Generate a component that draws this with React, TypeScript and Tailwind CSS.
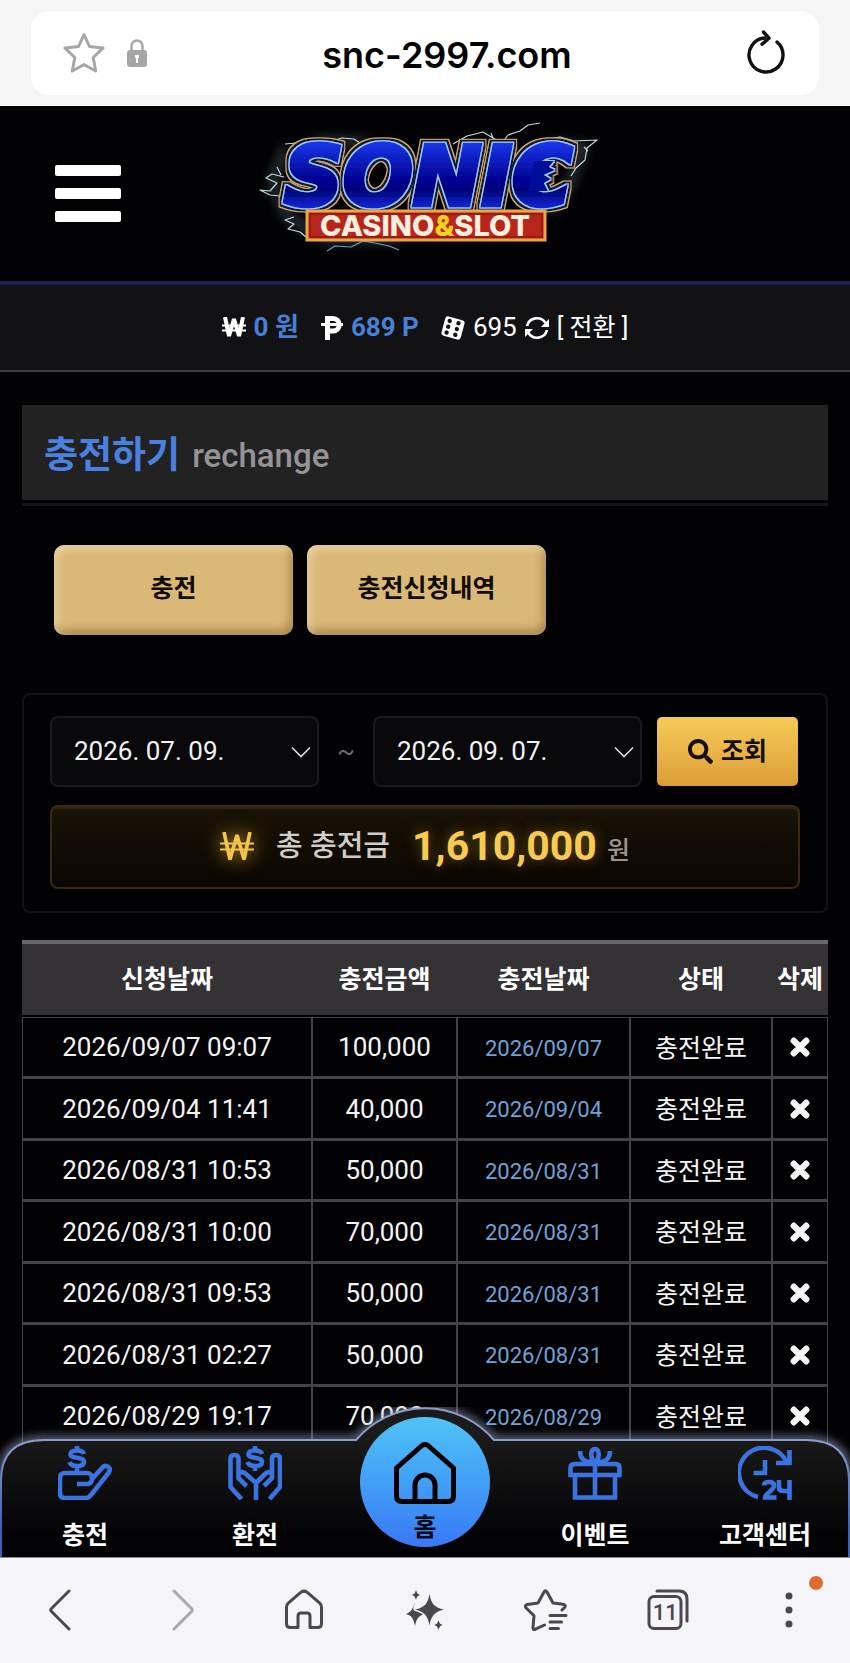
import type { ReactNode } from 'react'
import { FaSearch, FaTimes } from 'react-icons/fa'

interface Deposit {
  requestedAt: string
  amount: string
  paidAt: string
}

const deposits: Deposit[] = [
  { requestedAt: '2026/09/07 09:07', amount: '100,000', paidAt: '2026/09/07' },
  { requestedAt: '2026/09/04 11:41', amount: '40,000', paidAt: '2026/09/04' },
  { requestedAt: '2026/08/31 10:53', amount: '50,000', paidAt: '2026/08/31' },
  { requestedAt: '2026/08/31 10:00', amount: '70,000', paidAt: '2026/08/31' },
  { requestedAt: '2026/08/31 09:53', amount: '50,000', paidAt: '2026/08/31' },
  { requestedAt: '2026/08/31 02:27', amount: '50,000', paidAt: '2026/08/31' },
  { requestedAt: '2026/08/29 19:17', amount: '70,000', paidAt: '2026/08/29' },
]

/* ---------- Browser chrome ---------- */

function AddressBar() {
  return (
    <div className="shrink-0 border-b border-white bg-[#f5f5f5] px-[31px] pt-[11px] pb-[10px]">
      <div className="flex h-[84px] items-center rounded-[18px] bg-white px-8">
        <button type="button" aria-label="Bookmark">
          <svg width="42" height="42" viewBox="0 0 42 42" fill="none" stroke="#a6a6a6" strokeWidth="3" strokeLinejoin="round">
            <path d="M21 2.5l5.5 12 13.5 1.6-9.8 9.4 2.5 13.5L21 32.6 9.3 39l2.5-13.5L2 16.1l13.5-1.6z" />
          </svg>
        </button>
        <svg className="ml-[22px]" width="20" height="28" viewBox="0 0 20 28">
          <path d="M4.5 13V7a5.5 5.5 0 0 1 11 0v6" fill="none" stroke="#a6a6a6" strokeWidth="2.4" />
          <rect x="0" y="11" width="20" height="17" rx="3" fill="#a6a6a6" />
          <path d="M8 16h4v3h-1v5H9v-5H8z" fill="#fff" />
        </svg>
        <input
          type="text"
          readOnly
          aria-label="Address"
          value="snc-2997.com"
          className="min-w-0 flex-1 bg-transparent pt-1 pl-8 text-center font-['Inter',sans-serif] text-[36px] font-semibold text-black outline-none"
        />
        <button type="button" aria-label="Reload" className="ml-8">
          <svg width="40" height="46" viewBox="0 0 40 46" fill="none" stroke="#111" strokeWidth="3.4" strokeLinecap="round" strokeLinejoin="round">
            <path d="M30 12A17 17 0 1 1 18 8" />
            <path d="M16.5 2l5.5 6.2-7 6" />
          </svg>
        </button>
      </div>
    </div>
  )
}

function BrowserToolbar() {
  return (
    <nav className="grid h-[106px] shrink-0 grid-cols-7 place-items-center border-t border-[#88868a] bg-[#f5f4f8] pb-[2px] text-[#4a484d]">
      <button type="button" aria-label="Back">
        <svg width="24" height="44" viewBox="0 0 24 44" fill="none" stroke="currentColor" strokeWidth="3" strokeLinecap="round" strokeLinejoin="round">
          <path d="M20 3L2.5 20.5q-1.5 1.5 0 3L20 41" />
        </svg>
      </button>
      <button type="button" aria-label="Forward" className="text-[#a9a8ac]">
        <svg width="24" height="44" viewBox="0 0 24 44" fill="none" stroke="currentColor" strokeWidth="3" strokeLinecap="round" strokeLinejoin="round">
          <path d="M4 3l17.5 17.5q1.5 1.5 0 3L4 41" />
        </svg>
      </button>
      <button type="button" aria-label="Home">
        <svg width="40" height="42" viewBox="0 0 40 42" fill="none" stroke="currentColor" strokeWidth="3" strokeLinejoin="round">
          <path d="M14 38.5H6.5q-4 0-4-4V18q0-2.5 2-4.2L17 3.2q3-2.2 6 0l12.500 10.600q2 1.700 2 4.200v16.500q0 4-4 4H26V27q0-3-3-3h-6q-3 0-3 3z" />
        </svg>
      </button>
      <button type="button" aria-label="AI assist">
        <svg width="40" height="42" viewBox="0 0 40 42" fill="currentColor">
          <path d="M24.5 5c1.5 9 4.5 13.5 14.5 15.500-10 2.500-13 7-14.500 16-1.500-9-4.500-13.500-14.500-16C20 18.500 23 14 24.500 5z" />
          <path d="M11 1c1 3.500 1.500 4 4.500 5-3 1-3.500 1.500-4.500 5-1-3.500-1.500-4-4.500-5 3-1 3.500-1.500 4.500-5z" />
          <path d="M33.500 31c1 3.500 1.500 4 4.500 5-3 1-3.500 1.500-4.500 5-1-3.500-1.500-4-4.500-5 3-1 3.500-1.500 4.500-5z" />
          <path d="M10 14c-2.500 2.500-1 7.500-9 11C7 26.500 8.500 30 10 37c1.500-7 3-9.500 8-11.500-2-1.500-4-2-9-4-1.500-3 0-5 1-7.500z" />
        </svg>
      </button>
      <button type="button" aria-label="Bookmarks">
        <svg width="44" height="42" viewBox="0 0 44 42" fill="none" stroke="currentColor" strokeWidth="3" strokeLinecap="round" strokeLinejoin="round">
          <path d="M38 21l2.500-2.500q2-2.500-1.500-3.200l-10-1.300-6-11q-1.500-2.500-3 0l-6 11-10.500 1.500q-3.500.7-1.500 3.200l8 8-1 12q0 3 2.500 1.500L20.500 36" />
          <path d="M26 26.500h16M26 33h11.500M26 39.500h8.500" />
        </svg>
      </button>
      <button type="button" aria-label="Tabs" className="relative">
        <svg width="42" height="42" viewBox="0 0 42 42" fill="none" stroke="currentColor" strokeWidth="3" strokeLinecap="round">
          <rect x="2" y="7.500" width="32" height="32" rx="5" />
          <path d="M10 2h22q8 0 8 8v22" />
        </svg>
        <span className="absolute bottom-2 left-[6px] font-['Roboto',sans-serif] text-[22px] leading-5 font-medium">11</span>
      </button>
      <button type="button" aria-label="More" className="relative">
        <svg width="8" height="36" viewBox="0 0 8 36" fill="currentColor">
          <circle cx="4" cy="4" r="3.500" />
          <circle cx="4" cy="18" r="3.500" />
          <circle cx="4" cy="32" r="3.500" />
        </svg>
        <span className="absolute -top-4 left-6 size-[14px] rounded-full bg-[#dd6a32]" />
      </button>
    </nav>
  )
}

/* ---------- Site header ---------- */

function Logo() {
  return (
    <svg className="overflow-visible" width="350" height="134" viewBox="0 0 350 134" role="img" aria-label="Sonic Casino & Slot">
      <defs>
        <linearGradient id="blue" x1="0" y1="0" x2="0" y2="1">
          <stop offset="0.1" stopColor="#1a3cf0" />
          <stop offset="0.5" stopColor="#04069a" />
          <stop offset="0.65" stopColor="#03057a" />
          <stop offset="0.85" stopColor="#0e2ce4" />
        </linearGradient>
        <filter id="haze" x="-20%" y="-40%" width="140%" height="180%">
          <feGaussianBlur stdDeviation="6" />
        </filter>
        {/* light blue rim, dark band, then a gold edge round the word */}
        <filter id="rims" x="-10%" y="-20%" width="120%" height="140%">
          <feMorphology in="SourceAlpha" operator="dilate" radius="1" result="a" />
          <feMorphology in="SourceAlpha" operator="dilate" radius="3" result="b" />
          <feMorphology in="SourceAlpha" operator="dilate" radius="4" result="c" />
          <feFlood floodColor="#a4cdff" />
          <feComposite in2="a" operator="in" result="light" />
          <feFlood floodColor="#0a1c3c" />
          <feComposite in2="b" operator="in" result="dark" />
          <feFlood floodColor="#d8aa66" />
          <feComposite in2="c" operator="in" result="edge" />
          <feMerge>
            <feMergeNode in="edge" />
            <feMergeNode in="dark" />
            <feMergeNode in="light" />
            <feMergeNode in="SourceGraphic" />
          </feMerge>
        </filter>
      </defs>
      <g fill="none" stroke="#8fb4c4" strokeWidth="5" opacity="0.5" filter="url(#haze)">
        <path d="M36 20L22 54l14 34 30 20M300 16l34 4-14 36-18 30M66 14h50M70 112h80" />
      </g>
      <g fill="none" stroke="#c3d9de" strokeWidth="1.200" strokeLinejoin="round">
        <path d="M203 17l14-8 16-4 10 6 9 5 6-8 12-4 8-6 12-2M243 11l-2-5" />
        <path d="M298 12l12-2 14 4 23-1-10 8-2 12-9 8-5 8M334 20l4 4" />
        <path d="M82 14l10-3 12 1 6 4 12 1M56 20l-10-4-11 1M52 12l4 7" />
        <path d="M34 50l-12-3-6 4 11 5-7 8-10-1 10 5 10 1 4-8M27 40l4 8" />
        <path d="M44 90l-9 3 9 4-6 5 12 3 6 5M304 82l8-3" />
        <path d="M77 124l8-5 16 1 12-6 12 2 14 3 10 4" stroke="#6b9fce" />
      </g>
      <g filter="url(#rims)">
        <text
          x="34"
          y="78"
          className="font-['DejaVu_Sans',sans-serif] text-[82px] font-bold italic"
          fill="url(#blue)"
          stroke="url(#blue)"
          strokeWidth="5"
        >
          SONIC
        </text>
        {/* torn inner edge of the last letter */}
        <path d="M284 34h20l-5 6 6 3-11 5 7 4-7 4 4 8h-20z" fill="#06099a" />
      </g>
      <rect x="57" y="84" width="238" height="29" fill="#b8251c" stroke="#e9a748" strokeWidth="3" />
      <rect x="60" y="87" width="232" height="23" fill="none" stroke="#7c150f" />
      <text x="70" y="109" className="font-['Inter',sans-serif] text-[29px] font-extrabold" fill="#fdeedd">
        CASINO<tspan fill="#f5d21c">&amp;</tspan>SLOT
      </text>
    </svg>
  )
}

function SiteHeader() {
  return (
    <header className="flex h-[179px] items-center border-b-4 border-[#1c2352] px-[55px]">
      <button type="button" aria-label="Menu" className="flex w-[66px] flex-col gap-3">
        <span className="h-[11px] rounded-[2px] bg-white" />
        <span className="h-[11px] rounded-[2px] bg-white" />
        <span className="h-[11px] rounded-[2px] bg-white" />
      </button>
      <a href="#" className="mr-[66px] flex flex-1 justify-center">
        <Logo />
      </a>
    </header>
  )
}

function WonIcon() {
  return (
    <svg width="24" height="22" viewBox="0 0 24 22" fill="none" stroke="#fff">
      <path d="M3 0l4 19L12 2l5 17L21 0" strokeWidth="4" strokeLinejoin="bevel" />
      <path d="M0 8.500h24M0 13.500h24" strokeWidth="1.800" />
    </svg>
  )
}

function PointIcon() {
  return (
    <svg width="22" height="24" viewBox="0 0 22 24" fill="none" stroke="#fff">
      <path d="M6.500 24V2.500H12a5 5 0 0 1 0 12.500H6.500" strokeWidth="5" />
      <path d="M0 8.500h22" strokeWidth="3" />
    </svg>
  )
}

function DiceIcon() {
  return (
    <svg width="24" height="24" viewBox="0 0 24 24">
      <g transform="rotate(15 12 12)">
        <rect x="2" y="2" width="20" height="20" rx="3" fill="#fff" />
        <g fill="#121214">
          <circle cx="7" cy="6" r="2.200" />
          <circle cx="7" cy="12" r="2.200" />
          <circle cx="7" cy="18" r="2.200" />
          <circle cx="16" cy="6" r="2.200" />
          <circle cx="16" cy="12" r="2.200" />
          <circle cx="16" cy="18" r="2.200" />
        </g>
      </g>
    </svg>
  )
}

function ConvertIcon() {
  return (
    <svg width="24" height="24" viewBox="0 0 24 24" fill="none" stroke="#fff" strokeWidth="2.600">
      <path d="M2 10A10.200 10.200 0 0 1 20.500 7" />
      <path d="M22 14A10.200 10.200 0 0 1 3.500 17" />
      <path d="M24 3v8h-8zM0 21v-8h8z" fill="#fff" stroke="none" />
    </svg>
  )
}

function BalanceBar() {
  return (
    <div className="flex h-[87px] items-center justify-center border-b-2 border-[#3c3c3e] bg-[#121214] text-[26px] text-white">
      <WonIcon />
      <span className="ml-2 font-bold text-[#4a7fd6]">0 원</span>
      <span className="ml-[22px]">
        <PointIcon />
      </span>
      <span className="ml-2 font-bold text-[#4a7fd6]">689 P</span>
      <span className="ml-[22px]">
        <DiceIcon />
      </span>
      <span className="ml-2">695</span>
      <button type="button" className="ml-2 flex items-center gap-2 text-[25px]">
        <ConvertIcon />
        [ 전환 ]
      </button>
    </div>
  )
}

/* ---------- Deposit history ---------- */

function TabButton({ children }: { children: ReactNode }) {
  return (
    <button
      type="button"
      className="h-[90px] w-[239px] rounded-[10px] bg-[#dab877] pb-[2px] text-[25px] font-bold text-[#110c04] shadow-[inset_4px_4px_8px_rgba(255,235,200,0.5),inset_-3px_-5px_8px_rgba(120,85,30,0.5)]"
    >
      {children}
    </button>
  )
}

function DateSelect({ label, value }: { label: string; value: string }) {
  return (
    <div className="relative min-w-0 flex-1">
      <select
        aria-label={label}
        defaultValue={value}
        className="h-[71px] w-full appearance-none rounded-lg border-2 border-[#1b1a1e] bg-[#09080b] pl-[22px] text-[26px] text-[#f2f2f2]"
      >
        <option>{value}</option>
      </select>
      <svg className="pointer-events-none absolute top-[30px] right-2" width="20" height="12" viewBox="0 0 20 12" fill="none" stroke="#ddd" strokeWidth="1.600">
        <path d="M1 1.500l9 9 9-9" />
      </svg>
    </div>
  )
}

function SearchPanel() {
  return (
    <form className="mt-[58px] rounded-lg border-2 border-[#131216] px-[26px] pt-[21px] pb-[22px]">
      <div className="flex items-center">
        <DateSelect label="시작일" value="2026. 07. 09." />
        <span className="w-[54px] text-center text-[26px] text-[#6d6b70]">~</span>
        <DateSelect label="종료일" value="2026. 09. 07." />
        <button
          type="button"
          className="mr-[2px] ml-[15px] flex h-[69px] w-[141px] items-center justify-center gap-2 rounded-[5px] bg-gradient-to-b from-[#f5cb58] to-[#dc9d38] text-[25px] font-bold text-[#140d02]"
        >
          <FaSearch size={25} />
          조회
        </button>
      </div>
      <div className="mt-[18px] flex h-[84px] items-center justify-center rounded-lg border-2 border-[#3a2a14] bg-gradient-to-b from-[#1a1205] to-[#0a0702] shadow-[inset_0_2px_0_#2e2111]">
        <svg className="drop-shadow-[0_0_10px_#c89a2c]" width="34" height="30" viewBox="0 0 34 30" fill="none" stroke="#f2c44c">
          <path d="M4 0l6 27.500L17 3l7 24.500L30 0" strokeWidth="3.600" strokeLinejoin="bevel" />
          <path d="M0 11.500h34M0 17.500h34" strokeWidth="2" />
        </svg>
        <span className="ml-[22px] text-[29px] font-medium text-[#cfcdc9]">총 충전금</span>
        <strong className="ml-[22px] text-[41px] font-bold text-[#f7ca50] [text-shadow:0_0_14px_rgba(200,155,45,0.5)]">1,610,000</strong>
        <span className="mt-2 ml-[10px] text-[25px] font-medium text-[#9b968d]">원</span>
      </div>
    </form>
  )
}

function DepositTable() {
  const cell = 'border border-b-2 border-[#444346]'
  return (
    <table className="mt-[27px] w-full table-fixed border-separate border-spacing-0 text-center whitespace-nowrap">
      <colgroup>
        <col />
        <col className="w-[145px]" />
        <col className="w-[173px]" />
        <col className="w-[142px]" />
        <col className="w-[56px]" />
      </colgroup>
      <thead>
        <tr className="h-[77px] bg-[#343235] text-[25px] text-white">
          {['신청날짜', '충전금액', '충전날짜', '상태', '삭제'].map((name) => (
            <th key={name} className="border-t-4 border-b-2 border-t-[#69676b] border-b-black font-bold">
              {name}
            </th>
          ))}
        </tr>
      </thead>
      <tbody>
        {deposits.map((d) => (
          <tr key={d.requestedAt} className="text-[26px] leading-8 text-[#f4f4f4] odd:h-[61px] even:h-[62px]">
            <td className={cell}>{d.requestedAt}</td>
            <td className={cell}>{d.amount}</td>
            <td className="border border-b-2 border-[#444346] pt-[3px] text-[22px] text-[#6fa3d8]">{d.paidAt}</td>
            <td className="border border-b-2 border-[#444346] pt-[3px] text-[25px]">충전완료</td>
            <td className={cell}>
              <button type="button" aria-label="삭제" className="block w-full">
                <FaTimes size={26} className="mx-auto" stroke="currentColor" strokeWidth={28} />
              </button>
            </td>
          </tr>
        ))}
      </tbody>
    </table>
  )
}

/* ---------- Bottom menu ---------- */

const iconProps = {
  width: 54,
  height: 54,
  viewBox: '0 0 54 54',
  fill: 'none',
  stroke: '#3b74e0',
  strokeWidth: 4.6,
  strokeLinejoin: 'round' as const,
}

const dollar = 'M26 8C25 5 22.500 4.500 19 4.500c-4 0-6.500 1-6.500 3.700 0 5 13.500 2.300 13.500 7.500 0 3-2.500 4.300-7 4.300-4 0-6.500-1-7.500-4M19 0v4M19 20v5'

function DepositIcon() {
  return (
    <svg {...iconProps}>
      <path d={dollar} />
      <path d="M19 38h10q4 0 5-4 .5-7-5-7H7q-5 0-5 5v15q0 5 5 5h21q2.500 0 4.500-2.500L50.500 27q2.500-4 0-6-3.500-2.500-6.500 1L34 33" />
    </svg>
  )
}

function WithdrawIcon() {
  return (
    <svg {...iconProps}>
      <path d={dollar} transform="translate(8 0)" />
      <path d="M13.500 53L2.500 41V13q0-4 4-4t4 4v19l8 8M11 27q4-2 7 1l10 9v17" />
      <path d="M41.500 53L52 41V13q0-4-4-4t-4 4v19l-8 8M44 27q-4-2-7 1l-9 9" />
    </svg>
  )
}

function EventIcon() {
  return (
    <svg {...iconProps} strokeLinejoin="miter">
      <path d="M7 30v21.500h40V30M27 17v35" />
      <path d="M2.500 29v-7q0-4 4-4h41q4 0 4 4v7z" />
      <path d="M27 17c-5-5-5-14 0-14s5 9 0 14zM23 16c-7 0-11-4-11-11M31 16c7 0 11-4 11-11" />
    </svg>
  )
}

function SupportIcon() {
  return (
    <svg {...iconProps} strokeLinejoin="miter">
      <path d="M20 51A25 25 0 1 1 49 17" />
      <path d="M51.500 4v13H38" />
      <path d="M27 14v13H15.500" />
      <path d="M26 39.500q0-3.500 5-3.500t5 3.500c0 5-9 8-9 12h11.500M41 34v7q0 4 4 4h7M51.500 34v20" />
    </svg>
  )
}

function MenuLink({ label, icon }: { label: string; icon: ReactNode }) {
  return (
    <a href="#" className="flex h-[118px] flex-col items-center pt-[7px] text-[25px] leading-8 font-bold text-white">
      {icon}
      <span className="mt-5">{label}</span>
    </a>
  )
}

function BottomMenu() {
  const outline = 'M1 152V74Q1 33 44 33H356A91 91 0 0 1 494 33H806Q849 33 849 74V152'
  return (
    <nav className="absolute inset-x-0 bottom-0">
      <svg className="absolute inset-x-0 bottom-0 h-[150px] w-full overflow-hidden" viewBox="0 0 850 150" preserveAspectRatio="none">
        <defs>
          <linearGradient id="menuFill" x1="0" y1="0" x2="0" y2="1">
            <stop offset="0.15" stopColor="#1c1b1c" />
            <stop offset="0.85" stopColor="#030204" />
          </linearGradient>
          <linearGradient id="menuLine" x1="0" y1="0" x2="0" y2="1">
            <stop offset="0.2" stopColor="#8d9cc9" />
            <stop offset="0.8" stopColor="#3a62b4" />
          </linearGradient>
          <filter id="menuGlow" x="-5%" y="-20%" width="110%" height="140%">
            <feGaussianBlur stdDeviation="5" />
          </filter>
        </defs>
        <path d={outline} fill="none" stroke="#9fb4d4" strokeWidth="7" opacity="0.7" filter="url(#menuGlow)" />
        <path d={outline} fill="url(#menuFill)" stroke="url(#menuLine)" strokeWidth="2" />
      </svg>
      <div className="relative grid grid-cols-5 items-end">
        <MenuLink label="충전" icon={<DepositIcon />} />
        <MenuLink label="환전" icon={<WithdrawIcon />} />
        <a
          href="#"
          className="mb-[10px] flex size-[130px] flex-col items-center justify-self-center rounded-full bg-gradient-to-b from-[#50c3f5] to-[#3a78f6] pt-[25px] text-[25px] leading-8 font-bold text-[#0a0a14]"
        >
          <svg width="62" height="62" viewBox="0 0 62 62" fill="none" stroke="#000" strokeWidth="5" strokeLinejoin="round">
            <path d="M28 3.500q3-2 6 0L59.500 26v28q0 5.500-5.500 5.500H8q-5.500 0-5.500-5.500V26z" />
            <path d="M21 59V43a10 10 0 0 1 20 0v16" />
          </svg>
          <span className="mt-2">홈</span>
        </a>
        <MenuLink label="이벤트" icon={<EventIcon />} />
        <MenuLink label="고객센터" icon={<SupportIcon />} />
      </div>
    </nav>
  )
}

export default function App() {
  return (
    <div className="flex h-screen flex-col bg-black font-['Roboto','Noto_Sans_CJK_KR',sans-serif]">
      <AddressBar />
      <div className="relative min-h-0 flex-1 overflow-hidden bg-[#020103]">
        <SiteHeader />
        <BalanceBar />
        <main className="px-[22px] pt-[33px]">
          <h1 className="flex h-[95px] items-center bg-[#232223] pt-[6px] pl-[22px] text-[37px] font-bold text-[#4a80e0]">
            충전하기
            <small className="ml-3 text-[33px] font-medium text-[#959396]">rechange</small>
          </h1>
          <div className="mt-[3px] h-[3px] bg-[#171618]" />
          <div className="mt-[39px] flex gap-[14px] px-8">
            <TabButton>충전</TabButton>
            <TabButton>충전신청내역</TabButton>
          </div>
          <SearchPanel />
          <DepositTable />
        </main>
        <BottomMenu />
      </div>
      <BrowserToolbar />
    </div>
  )
}
